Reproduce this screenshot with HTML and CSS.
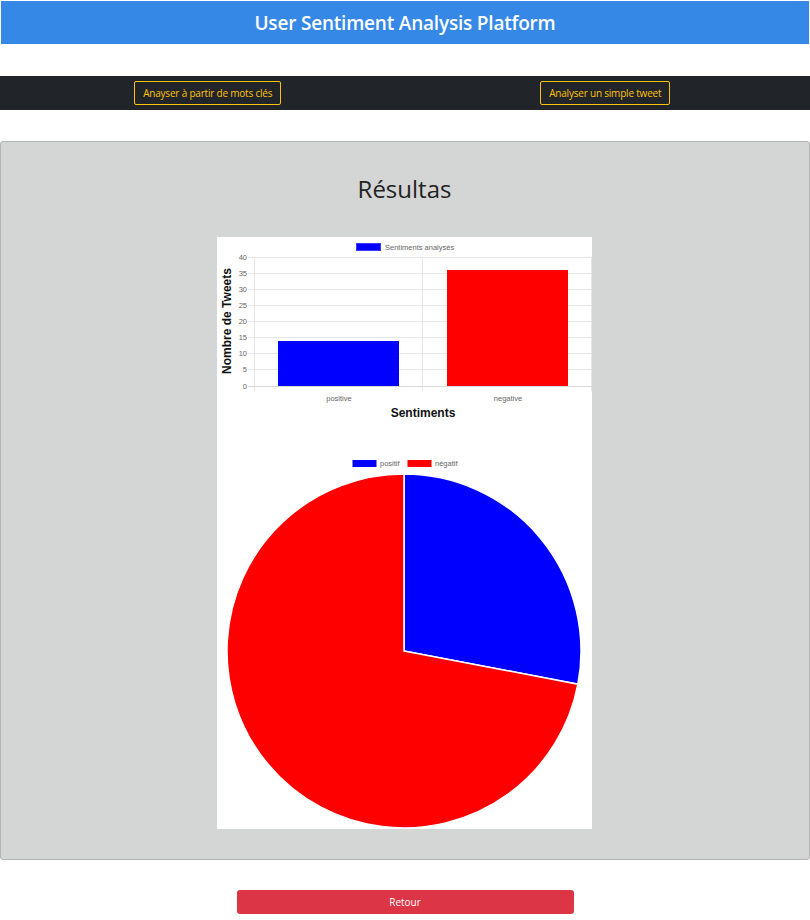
FILE: index.html
```html
<!DOCTYPE html>
<html lang="fr">
<head>
<meta charset="utf-8">
<title>User Sentiment Analysis Platform</title>
<link rel="stylesheet" href="styles.css">
</head>
<body>
<header class="topbar">
  <h1 class="title">User Sentiment Analysis Platform</h1>
</header>

<nav class="navbar">
  <div class="nav-col"><button class="btn-outline">Anayser à partir de mots clés</button></div>
  <div class="nav-col"><button class="btn-outline">Analyser un simple tweet</button></div>
</nav>

<section class="panel">
  <h2 class="panel-title">Résultas</h2>
  <div class="chart-card">
    <svg class="bar-chart" width="375" height="195" viewBox="0 0 375 195" xmlns="http://www.w3.org/2000/svg">
      <rect x="139.5" y="6.5" width="24" height="7" fill="#0000ff" stroke="#3a3aff" stroke-width="1"/>
      <text x="168" y="12.5" class="legend-text">Sentiments analysés</text>
      <g stroke="#e6e6e6" stroke-width="1">
        <line x1="31" y1="20.5" x2="375" y2="20.5"/>
        <line x1="31" y1="36.5" x2="375" y2="36.5"/>
        <line x1="31" y1="52.5" x2="375" y2="52.5"/>
        <line x1="31" y1="68.5" x2="375" y2="68.5"/>
        <line x1="31" y1="84.5" x2="375" y2="84.5"/>
        <line x1="31" y1="100.5" x2="375" y2="100.5"/>
        <line x1="31" y1="116.5" x2="375" y2="116.5"/>
        <line x1="31" y1="132.5" x2="375" y2="132.5"/>
        <line x1="37.5" y1="20" x2="37.5" y2="154"/>
        <line x1="205.5" y1="20" x2="205.5" y2="154"/>
        <line x1="374.5" y1="20" x2="374.5" y2="154"/>
      </g>
      <line x1="31" y1="149.5" x2="375" y2="149.5" stroke="#d8d8d8" stroke-width="1"/>
      <g class="tick-text" text-anchor="end">
        <text x="30" y="23">40</text>
        <text x="30" y="39">35</text>
        <text x="30" y="55">30</text>
        <text x="30" y="71">25</text>
        <text x="30" y="87">20</text>
        <text x="30" y="103">15</text>
        <text x="30" y="119">10</text>
        <text x="30" y="135">5</text>
        <text x="30" y="152">0</text>
      </g>
      <rect x="61" y="104" width="121" height="45" fill="#0000ff"/>
      <rect x="230" y="33" width="121" height="116" fill="#ff0000"/>
      <g class="tick-text" text-anchor="middle">
        <text x="122" y="164">positive</text>
        <text x="291" y="164">negative</text>
      </g>
      <text x="206" y="180" class="axis-title" text-anchor="middle">Sentiments</text>
      <text class="axis-title" text-anchor="middle" transform="translate(14 84) rotate(-90)">Nombre de Tweets</text>
    </svg>
    <svg class="pie-chart" width="375" height="397" viewBox="0 0 375 397" xmlns="http://www.w3.org/2000/svg">
      <rect x="135.5" y="28" width="24" height="7" fill="#0000ff"/>
      <text x="163" y="34" class="legend-text">positif</text>
      <rect x="190.5" y="28" width="24" height="7" fill="#ff0000"/>
      <text x="218" y="34" class="legend-text">négatif</text>
      <path d="M187 219 L187 42 A177 177 0 0 1 360.87 252.17 Z" fill="#0000ff" stroke="#ffffff" stroke-width="1.5"/>
      <path d="M187 219 L360.87 252.17 A177 177 0 1 1 187 42 Z" fill="#ff0000" stroke="#ffffff" stroke-width="1.5"/>
    </svg>
  </div>
</section>

<div class="footer-actions">
  <button class="btn-danger">Retour</button>
</div>
</body>
</html>
```

FILE: styles.css
```css
* { box-sizing: border-box; }

body {
  margin: 0;
  background: #ffffff;
  font-family: "Open Sans", "Noto Sans", sans-serif;
  color: #212529;
}

.topbar {
  margin: 1px 1px 0 1px;
  height: 43px;
  background: #3588e5;
  display: flex;
  align-items: center;
  justify-content: center;
}

.title {
  margin: 0;
  color: #ffffff;
  font-size: 19px;
  font-weight: 600;
  letter-spacing: -0.2px;
}

.navbar {
  margin-top: 32px;
  height: 34px;
  background: #212529;
  display: grid;
  grid-template-columns: 1fr 1fr;
  align-items: center;
  padding: 0 6px 0 9px;
}

.nav-col {
  display: flex;
  justify-content: center;
}

.btn-outline {
  font-family: "Open Sans", "Noto Sans", sans-serif;
  font-size: 10px;
  letter-spacing: -0.2px;
  color: #ffc107;
  background: transparent;
  border: 1px solid #ffc107;
  border-radius: 2px;
  height: 24px;
  padding: 0 8px;
}

.panel {
  margin-top: 31px;
  background: #d4d6d5;
  border: 1px solid #b3b5b4;
  border-radius: 3px;
  padding: 30px 1px 30px 0;
  display: flex;
  flex-direction: column;
  align-items: center;
}

.panel-title {
  margin: 0 0 31px;
  font-size: 24px;
  font-weight: 400;
  line-height: 34px;
  color: #222222;
}

.chart-card {
  width: 375px;
  background: #ffffff;
  display: flex;
  flex-direction: column;
}

.chart-card svg { display: block; }

.legend-text {
  font-family: "Liberation Sans", Arial, sans-serif;
  font-size: 7.5px;
  fill: #666666;
}

.tick-text text {
  font-family: "Liberation Sans", Arial, sans-serif;
  font-size: 7.5px;
  fill: #666666;
}

.axis-title {
  font-family: "Liberation Sans", Arial, sans-serif;
  font-size: 12px;
  font-weight: 700;
  fill: #111111;
}

.footer-actions {
  display: flex;
  justify-content: center;
  padding-top: 30px;
}

.btn-danger {
  width: 337px;
  height: 24px;
  background: #dc3545;
  color: #ffffff;
  border: none;
  border-radius: 3px;
  font-family: "Open Sans", "Noto Sans", sans-serif;
  font-size: 10px;
}
```
